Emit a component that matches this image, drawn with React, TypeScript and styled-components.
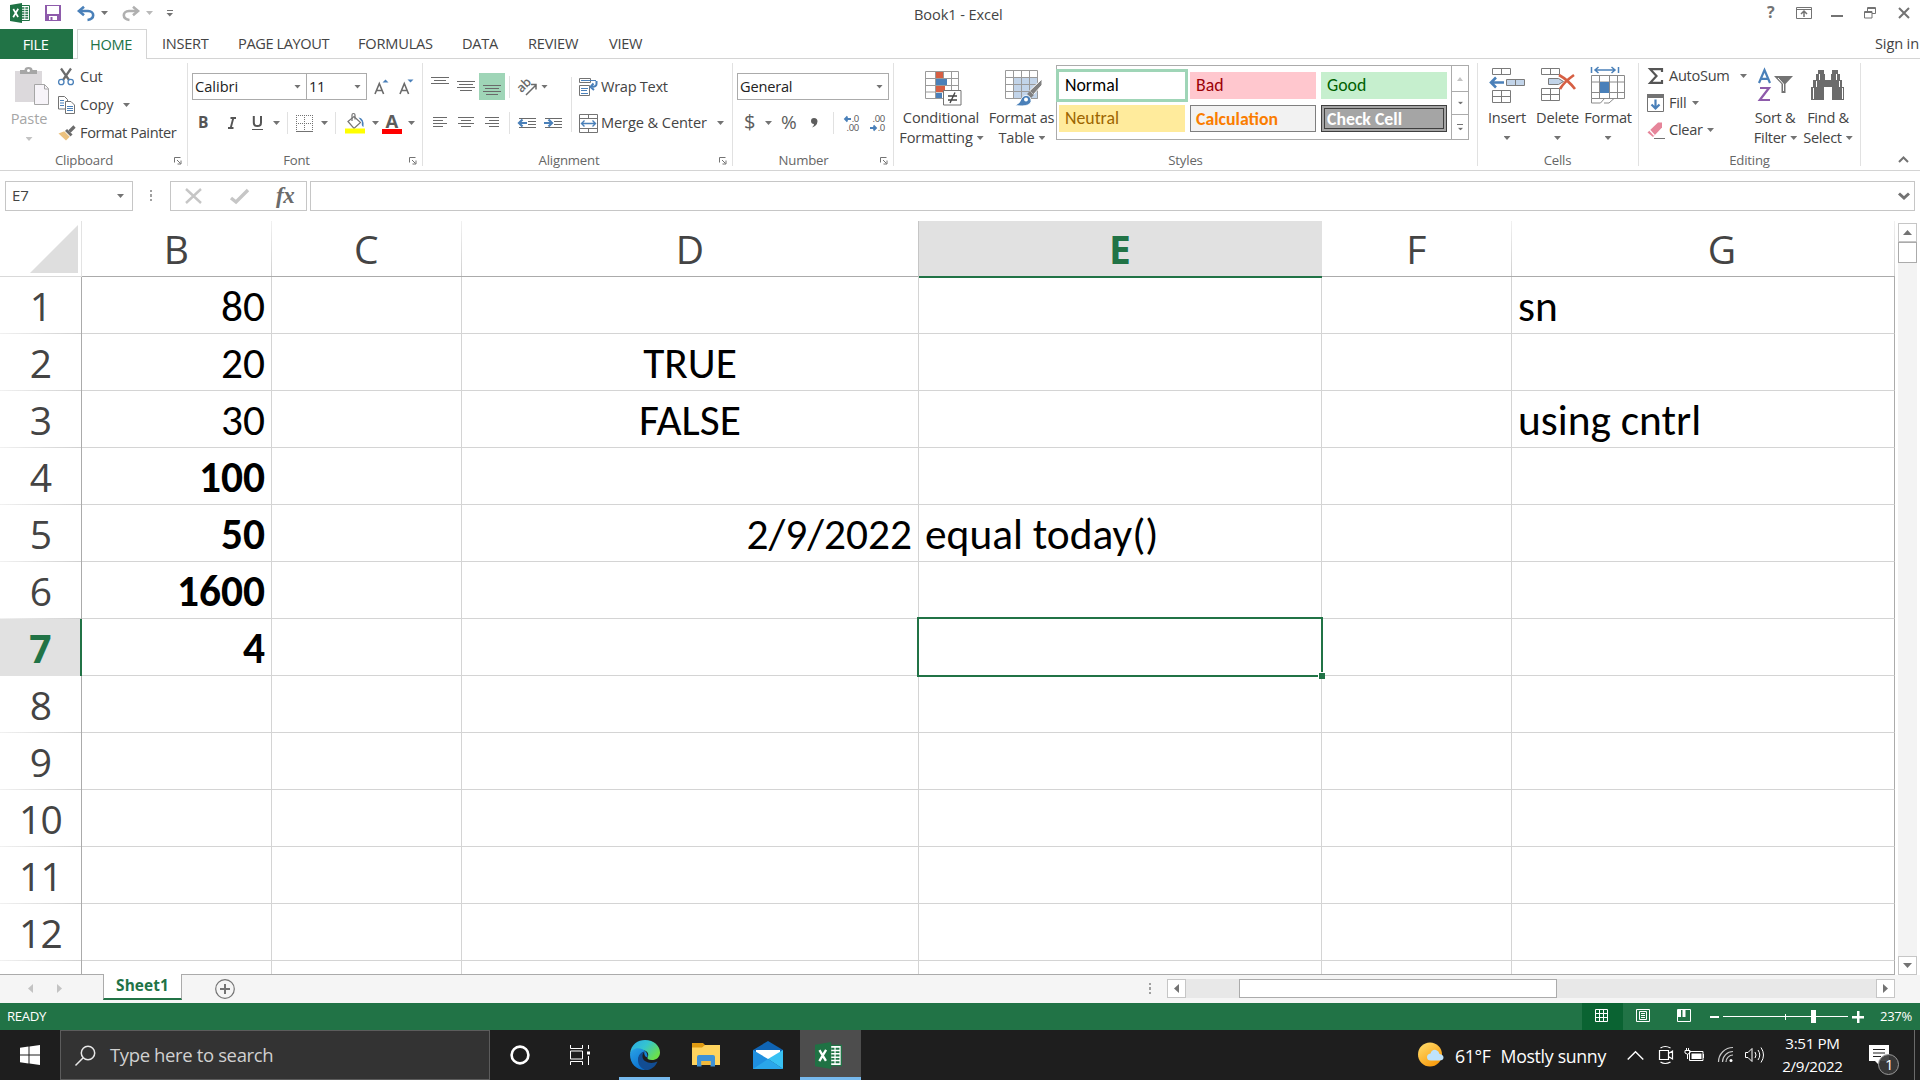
import React from 'react';
import styled, { createGlobalStyle, css } from 'styled-components';

const GREEN = '#217346';
const INK = '#444444';
const ICON = '#737373';
const BLUE = '#4a80b9';
const LINE = '#d4d4d4';

const Global = createGlobalStyle`
  * { box-sizing: border-box; }
  html, body { margin: 0; padding: 0; overflow: hidden; background: #fff; }
  body { font-family: "Open Sans", "Noto Sans", sans-serif; color: ${INK}; }
  svg { display: block; flex: none; overflow: visible; }
`;

const Window = styled.div`
  width: 1920px;
  height: 1080px;
  display: flex;
  flex-direction: column;
  background: #fff;
  overflow: hidden;
`;

/* Text label used all over the chrome */
const Label = styled.span<{ $size?: number; $ls?: number; $color?: string; $bold?: boolean }>`
  font-size: ${p => p.$size ?? 14.6}px;
  letter-spacing: ${p => p.$ls ?? -0.3}px;
  color: ${p => p.$color ?? INK};
  font-weight: ${p => (p.$bold ? 700 : 400)};
  line-height: 20px;
  padding-bottom: 2px;
  white-space: pre;
`;

/* Row of controls with explicit column tracks */
const Strip = styled.div<{ $cols: string; $h: number; $pl?: number }>`
  display: grid;
  grid-template-columns: ${p => p.$cols};
  height: ${p => p.$h}px;
  padding-left: ${p => p.$pl ?? 0}px;
  align-items: center;
  flex: none;
`;

const Caret = styled.i<{ $color?: string }>`
  display: block;
  width: 7px;
  height: 4px;
  flex: none;
  background: ${p => p.$color ?? ICON};
  clip-path: polygon(0 0, 100% 0, 50% 100%);
`;

/* ---------- title bar ---------- */
const TitleBar = styled.header`
  height: 29px;
  flex: none;
  display: grid;
  grid-template-columns: 914px 846px 160px;
`;
const TitleText = styled(Label)`
  padding-top: 4px;
`;

/* ---------- tabs ---------- */
const TabRow = styled.nav`
  height: 30px;
  flex: none;
  display: grid;
  grid-template-columns: 73px 4px 70px 15px 76px 120px 104px 66px 81px 1fr 45px;
  border-bottom: 1px solid ${LINE};
  > span { padding-top: 4px; }
`;
const FileTab = styled.div`
  background: ${GREEN};
  text-align: center;
  padding: 4px 2px 0 0;
  height: 30px;
`;
const ActiveTab = styled.div`
  border: 1px solid ${LINE};
  border-bottom: none;
  background: #fff;
  height: 30px;
  text-align: center;
  padding: 3px 2px 0 0;
`;

/* ---------- ribbon ---------- */
const Ribbon = styled.section`
  height: 112px;
  flex: none;
  display: flex;
  border-bottom: 1px solid ${LINE};
`;
const Group = styled.div<{ $w: number }>`
  width: ${p => p.$w}px;
  flex: none;
  height: 103px;
  margin-top: 4px;
  border-right: 1px solid #e1e1e1;
  display: flex;
  flex-direction: column;
`;
const GroupBody = styled.div`
  height: 87px;
  flex: none;
  display: flex;
`;
const Rows = styled.div<{ $pt?: number; $w?: number }>`
  display: flex;
  flex-direction: column;
  padding-top: ${p => p.$pt ?? 0}px;
  width: ${p => (p.$w ? p.$w + 'px' : 'auto')};
  flex: none;
`;
const GroupFooter = styled.div<{ $shift?: number }>`
  height: 20px;
  flex: none;
  display: flex;
  justify-content: center;
  padding-right: ${p => p.$shift ?? 0}px;
`;
const FooterRow = styled.div`
  display: grid;
  grid-template-columns: 1fr 13px;
`;
const LauncherSlot = styled.div`
  padding-top: 7px;
`;
const BigButton = styled.div<{ $w: number }>`
  width: ${p => p.$w}px;
  flex: none;
  display: flex;
  flex-direction: column;
  align-items: center;
`;
const IconArea = styled.div<{ $pt?: number; $pl?: number }>`
  height: 45px;
  padding: ${p => p.$pt ?? 4}px 0 0 ${p => p.$pl ?? 0}px;
`;
const PasteArea = styled(IconArea)`
  height: 46px;
`;
const TextLine = styled.div<{ $pl?: number }>`
  height: 20px;
  display: flex;
  align-items: center;
  gap: 4px;
  padding-left: ${p => p.$pl ?? 0}px;
`;
const ComboBox = styled.div<{ $overlap?: boolean }>`
  height: 27px;
  border: 1px solid #ababab;
  display: flex;
  align-items: center;
  justify-content: space-between;
  padding: 0 5px 0 2px;
  margin-left: ${p => (p.$overlap ? -1 : 0)}px;
`;
const VLine = styled.i<{ $h: number }>`
  display: block;
  width: 1px;
  height: ${p => p.$h}px;
  background: #e1e1e1;
`;
const TopAligned = styled.div`
  padding-bottom: 10px;
`;
const Pressed = styled.div`
  width: 26px;
  height: 27px;
  background: #9fd5b7;
  padding: 12px 0 0 4px;
`;
const GalleryBox = styled.div`
  display: grid;
  grid-template-columns: 394px 17px;
  width: 413px;
  height: 75px;
  margin: 2px 0 0 1px;
  border: 1px solid #ababab;
`;
const GalleryGrid = styled.div`
  display: grid;
  grid-template-columns: 126px 126px 126px;
  grid-template-rows: 27px 27px;
  gap: 6px 5px;
  padding: 6px 0 0 2px;
`;
const Swatch = styled.div<{ $bg: string; $fg: string; $kind?: 'active' | 'calc' | 'check' }>`
  background: ${p => p.$bg};
  color: ${p => p.$fg};
  font-family: Carlito, Calibri, "Open Sans", sans-serif;
  font-size: 17.8px;
  line-height: 27px;
  padding-left: 6px;
  white-space: pre;
  ${p => p.$kind === 'active' && css`box-shadow: 0 0 0 3px #9fd5b7;`}
  ${p => p.$kind === 'calc' && css`border: 1px solid #7f7f7f; font-weight: 700; line-height: 26px; padding-left: 5px;`}
  ${p => p.$kind === 'check' && css`border: 4px double #3f3f3f; font-weight: 700; line-height: 20px; padding-left: 2px;`}
`;
const GalleryScroll = styled.div`
  border-left: 1px solid #ababab;
  display: grid;
  grid-template-rows: 26px 23px 24px;
`;
const ScrollStep = styled.div`
  display: flex;
  flex-direction: column;
  gap: 2px;
  align-items: center;
  justify-content: center;
  border-bottom: 1px solid #ababab;
  &:last-child { border-bottom: none; }
  i { transform: scale(0.8); }
`;
const RibbonEnd = styled.div`
  flex: 1;
  padding: 97px 0 0 37px;
`;

/* ---------- formula bar ---------- */
const FormulaRow = styled.section`
  height: 50px;
  flex: none;
  padding: 10px 5px 0 5px;
  display: grid;
  grid-template-columns: 128px 37px 137px 3px 1605px;
`;
const Box = styled.div`
  height: 30px;
  border: 1px solid #c6c6c6;
  display: flex;
  align-items: center;
`;
const NameBox = styled(Box)`
  justify-content: space-between;
  padding: 0 8px 0 6px;
`;
const FxBox = styled(Box)`
  padding-left: 14px;
  gap: 27px;
`;
const InputBox = styled(Box)`
  justify-content: flex-end;
  padding-right: 4px;
`;
const FxGlyph = styled.span`
  font-family: "Liberation Serif", serif;
  font-style: italic;
  font-weight: 700;
  font-size: 23px;
  line-height: 24px;
  letter-spacing: -0.5px;
  color: #6b6b6b;
`;
const Dots = styled.div`
  display: flex;
  flex-direction: column;
  justify-content: center;
  gap: 2px;
  height: 29px;
  padding-left: 17px;
`;
const Dot = styled.i`
  width: 2px;
  height: 2.6px;
  background: #a0a0a0;
`;

/* ---------- sheet ---------- */
const SheetArea = styled.main`
  height: 754px;
  flex: none;
  display: grid;
  grid-template-columns: 1895px 25px;
  background: #fff;
`;
const Sheet = styled.div`
  display: grid;
  grid-template-columns: 82px 190px 190px 457px 403px 190px 383px;
  grid-template-rows: 56px repeat(12, 57px) 14px;
  overflow: hidden;
  border-bottom: 1px solid #ababab;
`;
const Corner = styled.div`
  border-bottom: 1px solid #d9d9d9;
  border-right: 1px solid #e3e3e3;
  padding: 4px 0 0 30px;
`;
const CornerMark = styled.i`
  display: block;
  width: 48px;
  height: 48px;
  background: #dedede;
  clip-path: polygon(100% 0, 100% 100%, 0 100%);
`;
const headFont = css`
  font-size: 39px;
  letter-spacing: -0.8px;
  white-space: pre;
  text-align: center;
`;
const ColHead = styled.div<{ $on?: boolean; $cut?: boolean }>`
  ${headFont}
  line-height: 56px;
  padding: 0 2px 0 ${p => (p.$cut ? 38 : 0)}px;
  color: ${p => (p.$on ? GREEN : INK)};
  font-weight: ${p => (p.$on ? 700 : 400)};
  background: ${p => (p.$on ? '#e1e1e1' : 'linear-gradient(#f1f1f1, #d0d0d0) right / 1px 100% no-repeat')};
  box-shadow: ${p => (p.$on ? `0 1px 0 ${GREEN}, -1px 0 0 #c6c6c6` : 'none')};
  border-bottom: 1px solid ${p => (p.$on ? GREEN : '#ababab')};
  ${p => p.$on && css`z-index: 1;`}
`;
const RowHead = styled.div<{ $on?: boolean }>`
  ${headFont}
  line-height: 57px;
  color: ${p => (p.$on ? GREEN : INK)};
  font-weight: ${p => (p.$on ? 700 : 400)};
  background: ${p => (p.$on ? '#e1e1e1' : 'linear-gradient(90deg, #f1f1f1, #d0d0d0) bottom / 100% 1px no-repeat')};
  border-right: ${p => (p.$on ? `2px solid ${GREEN}` : '1px solid #ababab')};
`;
const Cell = styled.div<{ $align?: string; $bold?: boolean; $last?: boolean }>`
  border-right: 1px solid ${p => (p.$last ? '#ababab' : LINE)};
  border-bottom: 1px solid ${LINE};
  font-family: Carlito, Calibri, "Open Sans", sans-serif;
  font-size: 43.4px;
  line-height: 59px;
  color: #000;
  text-align: ${p => p.$align ?? 'left'};
  font-weight: ${p => (p.$bold ? 700 : 400)};
  padding: 0 6px;
  white-space: pre;
  position: relative;
  min-width: 0;
`;
const Selection = styled.div`
  position: absolute;
  inset: -2px;
  border: 2px solid ${GREEN};
  z-index: 2;
`;
const FillHandle = styled.i`
  position: absolute;
  right: -4px;
  bottom: -4px;
  width: 7px;
  height: 7px;
  background: ${GREEN};
  border: 1px solid #fff;
  border-width: 1px 0 0 1px;
`;
const VScroll = styled.div`
  width: 19px;
  margin: 2px 0 0 3px;
  display: flex;
  flex-direction: column;
  background: #f3f3f3;
`;
const ScrollButton = styled.div`
  width: 19px;
  height: 19px;
  flex: none;
  border: 1px solid #c6c6c6;
  background: #fff;
  display: flex;
  align-items: center;
  justify-content: center;
`;
const VThumb = styled.div`
  height: 21px;
  border: 1px solid #ababab;
  background: #fff;
`;
const Spacer = styled.div`
  flex: 1;
`;

/* ---------- sheet tabs ---------- */
const SheetTabs = styled.section`
  height: 28px;
  flex: none;
  background: #f5f5f5;
  display: grid;
  grid-template-columns: 103px 79px 33px 934px 18px 728px 1fr;
`;
const NavArrows = styled.div`
  display: flex;
  gap: 24px;
  padding: 9px 0 0 28px;
`;
const SheetTab = styled.div`
  height: 26px;
  margin-top: -1px;
  background: #fff;
  border: 1px solid #ababab;
  border-top: none;
  border-bottom: 2px solid ${GREEN};
  text-align: center;
  line-height: 22px;
  z-index: 1;
`;
const AddSheet = styled.div`
  padding-top: 4px;
`;
const HScroll = styled.div`
  height: 19px;
  margin-top: 4px;
  display: flex;
  background: #e8e8e8;
`;
const HThumb = styled.div`
  width: 318px;
  height: 19px;
  margin-left: 53px;
  background: #fff;
  border: 1px solid #ababab;
`;
const TabDots = styled(Dots)`
  height: 27px;
  padding-left: 0;
`;

/* ---------- status bar ---------- */
const StatusBar = styled.section`
  height: 27px;
  flex: none;
  background: ${GREEN};
  display: grid;
  grid-template-columns: 1582px 41px 40px 47px 170px 40px;
  align-items: center;
`;
const ViewButton = styled.div<{ $on?: boolean; $pr?: number }>`
  height: 27px;
  display: flex;
  align-items: center;
  justify-content: center;
  padding: 0 ${p => p.$pr ?? 2}px 2px 0;
  background: ${p => (p.$on ? '#0a6332' : 'transparent')};
`;
const Status = styled(Label)`
  padding-left: 7px;
`;

/* ---------- task bar ---------- */
const Taskbar = styled.footer`
  height: 50px;
  flex: none;
  background: #1e1e1e;
  display: grid;
  grid-template-columns: 60px 430px 60px 60px 60px 72px 58px 61px 557px 209px 149px 73px 65px 1fr;
`;
const TaskItem = styled.div<{ $on?: boolean; $pr?: number }>`
  display: flex;
  align-items: center;
  justify-content: center;
  padding-right: ${p => p.$pr ?? 0}px;
  background: ${p => (p.$on ? '#4d4d4d' : 'transparent')};
`;
const RunningItem = styled(TaskItem)<{ $inset: number }>`
  border-bottom: 3px solid #76b9ed;
  margin-left: ${p => p.$inset}px;
  padding-top: 3px;
`;
const SearchBox = styled.div`
  background: #333;
  border: 1px solid #5c5c5c;
  display: flex;
  align-items: center;
  padding: 2px 0 0 14px;
  gap: 14px;
`;
const Weather = styled.div`
  display: flex;
  align-items: center;
  gap: 11px;
`;
const WeatherText = styled.div`
  display: flex;
  gap: 10px;
  padding-top: 4px;
`;
const Tray = styled.div`
  display: grid;
  grid-template-columns: 32px 26px 33px 27px 30px;
  align-items: center;
`;
const Clock = styled.div`
  display: flex;
  flex-direction: column;
  align-items: center;
  gap: 1px;
  padding-top: 3px;
`;
const Notifications = styled.div`
  padding: 14px 0 0 19px;
`;
const ShowDesktop = styled.div`
  border-left: 1px solid #6a6a6a;
`;

/* ---------- icons ---------- */
const ExcelIcon = ({ w }: { w: number }) => (
  <svg width={w} height={w} viewBox="0 0 20 20">
    <path d="M11 2.500h8.500v15H11z" fill="#fff" stroke={GREEN} />
    <path d="M12 5h2.400M12 7.500h2.400M12 10h2.400M12 12.500h2.400M12 15h2.400M15.300 5h2.800M15.300 7.500h2.800M15.300 10h2.800M15.300 12.500h2.800M15.300 15h2.800" stroke={GREEN} strokeWidth="1.300" />
    <path d="M0 2 12 0v20L0 18z" fill="#1f7244" />
    <path d="m3.300 6 4.800 8M8.200 5.800 3.200 14.200" stroke="#fff" strokeWidth="1.700" />
  </svg>
);
const SaveIcon = () => (
  <svg width="16" height="16" viewBox="0 0 16 16">
    <path d="M0 0h16v16H0z" fill="#8e5bab" />
    <path d="M2 1h12v8H2z" fill="#fff" />
    <path d="M4 11h8v4H4z" fill="#fff" />
    <path d="M5.500 12h2v3h-2z" fill="#8e5bab" />
  </svg>
);
const UndoIcon = ({ color, flip }: { color: string; flip?: boolean }) => (
  <svg width="18" height="15" viewBox="0 0 18 15">
    <g transform={flip ? 'translate(18 0) scale(-1 1)' : undefined} fill="none" stroke={color} strokeWidth="2.600">
      <path d="M7 0.800 2 5l5 4.200" />
      <path d="M2.500 5h8.500c7 0.300 7 8.200-0.500 9" />
    </g>
  </svg>
);
const PasteIcon = () => (
  <svg width="34" height="38" viewBox="0 0 34 38">
    <path d="M0 4h27v31H0z" fill="#dcd9dc" />
    <path d="M5 7V3h4.500q0-3 4-3t4 3H22v4z" fill="#a6a6a6" />
    <circle cx="13.500" cy="3.500" r="1.500" fill="#fff" />
    <path d="M19.500 17.500h10l4 4v16h-14z" fill="#f7f4f9" stroke="#a6a6a6" />
    <path d="M29.500 17.500v4.500h4" fill="none" stroke="#a6a6a6" />
  </svg>
);
const CutIcon = () => (
  <svg width="16" height="18" viewBox="0 0 16 18">
    <path d="M3 0.500 11 12M13 0.500 5 12" stroke="#6b6b6b" strokeWidth="2.200" />
    <circle cx="3.300" cy="14" r="2.700" fill="none" stroke={BLUE} strokeWidth="1.300" />
    <circle cx="12.700" cy="14" r="2.700" fill="none" stroke={BLUE} strokeWidth="1.300" />
  </svg>
);
const CopyIcon = () => (
  <svg width="17" height="18" viewBox="0 0 17 18">
    <path d="M.5.500h6l3 3v9.500h-9z" fill="#fff" stroke={ICON} />
    <path d="M2 4.500h4M2 7h4M2 9.500h4" stroke={BLUE} />
    <path d="M7.500 5.500h5.500l3.500 3.500v8.500h-9z" fill="#fff" stroke={ICON} />
    <path d="M9 10.500h6M9 12.500h6M9 14.500h6" stroke={BLUE} />
  </svg>
);
const BrushIcon = () => (
  <svg width="18" height="16" viewBox="0 0 18 16">
    <path d="M0.500 8.500 7 6l5 5.500-4 4z" fill="#ecc27f" />
    <path d="m8 5 5.500 5.500" stroke="#6b6b6b" strokeWidth="3" />
    <path d="m11.500 6.500 5-5" stroke="#6b6b6b" strokeWidth="3.200" />
    <path d="m6.200 5.800 6 6" stroke="#fff" strokeWidth="0.900" />
  </svg>
);
const Launcher = () => (
  <svg width="8" height="8" viewBox="0 0 8 8" fill="none" stroke={ICON}>
    <path d="M.5 5.500V.500h6M3 3l3.500 3.500M7 3.500V7H3.500" />
  </svg>
);
const GrowIcon = ({ down }: { down?: boolean }) => (
  <svg width="16" height="16" viewBox="0 0 16 16">
    <path d="M1 15 5.300 4.500 9.600 15M2.600 11.500h5.400" fill="none" stroke="#6b6b6b" strokeWidth="1.600" />
    <path d={down ? 'M8.500 0.500h6l-3 3z' : 'M8.500 3.500h6l-3-3z'} fill={BLUE} />
  </svg>
);
const BordersIcon = () => (
  <svg width="17" height="17" viewBox="0 0 17 17" stroke={ICON} fill="none">
    <path d="M0 .5h17M.5 0v16M8.500 0v16M16.500 0v16M0 8.500h17" strokeDasharray="1 1" />
    <path d="M0 16.500h17" />
  </svg>
);
const BucketIcon = () => (
  <svg width="20" height="21" viewBox="0 0 20 21">
    <path d="M3 8.500 9 3.500l6.500 6-6.500 6z" fill="#fff" stroke={ICON} strokeWidth="1.200" />
    <path d="M7 8V2q0-1.500 1.500-1.500T10 2v4.500" fill="none" stroke={ICON} strokeWidth="1.200" />
    <path d="M13.500 4.500q6 0.500 5 9.500-2.500-1-1.500-5z" fill={BLUE} />
    <path d="M0 15.500h20v5H0z" fill="#ffff00" />
  </svg>
);
const FontColor = styled.div`
  width: 20px;
  height: 21px;
  border-bottom: 5px solid #ff0000;
  font-weight: 700;
  font-size: 18.5px;
  line-height: 15px;
  text-align: center;
  color: #5d5d5d;
`;
const Lines = ({ rows, w = 18, align = 'mid' }: { rows: number[]; w?: number; align?: string }) => (
  <svg width={w} height={rows.length * 3} viewBox={`0 0 ${w} ${rows.length * 3}`} shapeRendering="crispEdges">
    {rows.map((r, i) => (
      <rect key={i} y={i * 3} x={align === 'left' ? 0 : align === 'right' ? w - r : (w - r) / 2} width={r} height="1" fill="#6a6a6a" />
    ))}
  </svg>
);
const OrientIcon = () => (
  <svg width="20" height="18" viewBox="0 0 20 18">
    <text x="0" y="11" transform="rotate(-45 7 9)" fontSize="12.500" fontWeight="600" fill="#6a6a6a">ab</text>
    <path d="M8 17 17.500 7.500M13 6.500h5v5" fill="none" stroke="#6a6a6a" strokeWidth="1.500" />
  </svg>
);
const IndentIcon = ({ right }: { right?: boolean }) => (
  <svg width="18" height="11" viewBox="0 0 18 11">
    <path d="M1 .5h17M10 3.500h8M10 6.500h8M1 9.500h17" stroke="#6a6a6a" />
    <path d="M0 3h10v4H0z" fill="#fff" />
    <path d={right ? 'M0 5h8M4.500 1.500 8 5 4.500 8.500' : 'M9 5H1M4.500 1.500 1 5l3.500 3.500'} fill="none" stroke={BLUE} strokeWidth="2.200" />
  </svg>
);
const WrapIcon = () => (
  <svg width="19" height="18" viewBox="0 0 19 18" fill="none">
    <path d="M.5.500h11v4H.500zM.5 7.500h10v10H.500z" stroke={ICON} />
    <path d="M2 2.500h15M2 10.500h7M2 12.500h6M2 15.500h7" stroke={BLUE} />
    <path d="M17.500 3v3q0 3-6 3M14.500 5.500 11.500 9l3.500 3" stroke={BLUE} strokeWidth="2" />
  </svg>
);
const MergeIcon = () => (
  <svg width="19" height="19" viewBox="0 0 19 19" fill="none" stroke={ICON}>
    <path d="M.5.500h18v18H.500zM.5 4.500h18M.5 14.500h18M9.500.500v4M9.500 14.500v4" />
    <path d="M2.500 9.500h14M5.500 6.500l-3 3 3 3M13.500 6.500l3 3-3 3" stroke={BLUE} strokeWidth="1.400" />
  </svg>
);

/* Two stacked digits with a blue arrow beside one of them */
const DecimalBox = styled.div`
  width: 16px;
  height: 18px;
  display: flex;
  flex-direction: column;
  font-size: 9.5px;
  line-height: 9px;
  letter-spacing: -0.3px;
  color: #555;
`;
const DecimalLine = styled.div`
  display: flex;
  height: 9px;
  justify-content: flex-end;
  align-items: center;
  gap: 1px;
`;
const DecimalArrow = ({ right }: { right?: boolean }) => (
  <svg width="7" height="6" viewBox="0 0 7 6">
    <path d={right ? 'M0 3h6M3.500.5 6 3 3.500 5.500' : 'M7 3H1M3.500.5 1 3l2.500 2.500'} fill="none" stroke={BLUE} strokeWidth="1.800" />
  </svg>
);
const DecimalIcon = ({ dec }: { dec?: boolean }) => (
  <DecimalBox>
    <DecimalLine>{!dec && <DecimalArrow />}{dec ? '.00' : '.0'}</DecimalLine>
    <DecimalLine>{dec && <DecimalArrow right />}{dec ? '.0' : '.00'}</DecimalLine>
  </DecimalBox>
);
const CondIcon = () => (
  <svg width="37" height="35" viewBox="0 0 37 35">
    <path d="M.5.500h33v27H.500zM.5 7.500h33M.5 14.500h33M.5 21h33M10.500.500v27M18.500.500v27M26.500.500v27" fill="#fff" stroke="#9a9a9a" />
    <path d="M11 1h7v6h-7zM11 15h9v6h-9z" fill="#d65f43" />
    <path d="M11 8h11v6H11zM11 22h6v5h-6z" fill={BLUE} />
    <path d="M18.500 19.500h17.500v14.500H18.500z" fill="#fff" stroke={ICON} />
    <path d="M23 25h9M23 29h9M30 21.500 25 32" stroke={INK} strokeWidth="1.400" />
  </svg>
);
const TableIcon = () => (
  <svg width="38" height="36" viewBox="0 0 38 36">
    <path d="M.5.500h32v28H.500z" fill="#fff" />
    <path d="M9 8h24v21H9z" fill="#c2d4e9" />
    <path d="M.5.500h32v28H.500zM.5 7.500h32M.5 14.500h32M.5 21.500h32M8.500.500v28M16.500.500v28M24.500.500v28" fill="none" stroke="#9a9a9a" />
    <path d="M37 9v6l-8.500 9.500-4-3.500z" fill="#808080" stroke="#fff" />
    <path d="m23.500 22.500 4 4" stroke="#808080" strokeWidth="4" />
    <path d="M10 35.500q5-2 6.500-7 3-5 8-2 4 6-2 8.500-4 1.500-12.500.500z" fill={BLUE} stroke="#fff" strokeWidth=".8" />
    <circle cx="21" cy="29.500" r="2" fill="#fff" />
  </svg>
);
const InsertIcon = () => (
  <svg width="36" height="36" viewBox="0 0 36 36" fill="none" stroke="#7a7a7a">
    <path d="M3.500.500h18v6h-18zM12.500.500v6M3.500 22.500h18v12h-18zM12.500 22.500v12M3.500 28.500h18" />
    <path d="M17.500 11.500h18v6h-18z" fill="#c2d4e9" /><path d="M26.500 11.500v6" />
    <path d="M15 14.500H2M7 9.500l-5 5 5 5" stroke={BLUE} strokeWidth="2.600" />
  </svg>
);
const DeleteIcon = () => (
  <svg width="36" height="36" viewBox="0 0 36 36" fill="none" stroke="#7a7a7a">
    <path d="M1.500.500h18v6h-18zM10.500.500v6M1.500 20.500h18v12h-18zM10.500 20.500v12M1.500 26.500h18" />
    <path d="M8.500 10.500h10l5 3-5 3h-10z" fill="#c2d4e9" />
    <path d="M19 7q9 5 16 14M34 7Q24 14 20 21" stroke="#d65f43" strokeWidth="2.600" />
  </svg>
);
const FormatIcon = () => (
  <svg width="34" height="37" viewBox="0 0 34 37" fill="none" stroke="#8a8a8a">
    <path d="M.5 8.500h33v23H.500zM.5 15h33M.5 25.500h33M8.500 8.500v23M18.500 8.500v23M26.500 8.500v23" />
    <path d="M9 15h9v11H9z" fill={BLUE} stroke="none" />
    <path d="M.5 31.500v4.500h9l4-4.500M13 36h5l5-4.500" />
    <path d="M.5 0v6M27.500 0v6M4 3h20M7.500 0l-3.500 3 3.500 3M20.500 0l3.500 3-3.500 3" stroke={BLUE} strokeWidth="1.500" />
  </svg>
);
const SigmaIcon = () => (
  <svg width="16" height="16" viewBox="0 0 16 16">
    <path d="M14 4V1.200H2.200L8.500 8 2.200 14.800H14V12" fill="none" stroke="#555" strokeWidth="2.200" />
  </svg>
);
const FillIcon = () => (
  <svg width="17" height="18" viewBox="0 0 17 18" fill="none">
    <path d="M.5 1h16v16.500H.500z" stroke={ICON} /><path d="M0 0h17v4H0z" fill={ICON} />
    <path d="M8.500 5.500v9M4.500 10.500l4 4 4-4" stroke={BLUE} strokeWidth="2.200" />
  </svg>
);
const EraserIcon = () => (
  <svg width="18" height="17" viewBox="0 0 18 17">
    <path d="M0.500 10.500 11 0.500h4v5L6 15z" fill="#e6859a" />
    <path d="m2.500 8 5 5.500" stroke="#fff" strokeWidth="1.300" />
    <path d="M7 16.500h11" stroke={ICON} />
  </svg>
);
const SortIcon = () => (
  <svg width="35" height="33" viewBox="0 0 35 33" fill="none">
    <path d="M1 14 6.500 1 12 14M3 9.800h7" stroke={BLUE} strokeWidth="2.200" />
    <path d="M2 19h9L1.800 31H12" stroke="#8e5bab" strokeWidth="2.200" />
    <path d="M16 7h19l-7.500 8v9h-4v-9z" fill={ICON} /><path d="m20 9 5.500 6v7" stroke="#fff" />
  </svg>
);
const FindIcon = () => (
  <svg width="34" height="31" viewBox="0 0 34 31" fill="#6b6b6b">
    <path d="M7 0h6v4h1v6h6V4h1V0h6v4h2v6h2v7h2v13H21V17h-8v13H0V17h2v-7h3V4h2z" />
    <path d="M2.500 18v11M5.500 11v6M8.500 4v6M31.500 18v11M28.500 11v6M25.500 4v6" stroke="#fff" fill="none" />
  </svg>
);
const EdgeIcon = () => (
  <svg width="30" height="30" viewBox="0 0 30 30">
    <defs>
      <linearGradient id="edgeTop" x1="0" y1="0" x2="1" y2=".6"><stop offset="0" stopColor="#2aa7e8" /><stop offset=".5" stopColor="#34c4d0" /><stop offset="1" stopColor="#6be04b" /></linearGradient>
      <linearGradient id="edgeLow" x1="0" y1="0" x2=".6" y2="1"><stop offset="0" stopColor="#2aa3e6" /><stop offset="1" stopColor="#0a6fce" /></linearGradient>
    </defs>
    <path d="M0 14C1 4 8 0 15 0c9 0 15 6 15 12.500 0 5-4 7.500-8 7.500-3.500 0-5-1-4.500-2.500C20 13 16 10 12 10 6 10 1 13 0 14z" fill="url(#edgeTop)" />
    <path d="M0 14.500C1 9 7 7 12 9c4 1.500 6 5 5.500 8.500C14 17 14 12 14.500 11.500 9 13 7 19 10 24c1.500 3 4 5.500 6 6C7 30.500 0 24 0 14.500z" fill="url(#edgeLow)" />
    <path d="M8 20c0-4.500 2.500-7.500 6.500-8.500-3 3-2.500 7.500.5 9.500 3.500 2.500 8.500 2.500 12.500.5C25 27.500 20 30.500 15.500 30 11 28.500 8 25 8 20z" fill="#124d93" />
  </svg>
);
const FolderIcon = () => (
  <svg width="28" height="24" viewBox="0 0 28 24">
    <path d="M0 0h11l3 3v3H0z" fill="#e09b12" />
    <path d="M0 4.500h10L13 2h15v20H0z" fill="#ffd45e" />
    <path d="M5 23.500V14q0-2 2-2h14q2 0 2 2v9.500h-4.500V18h-9v5.500z" fill="#3f92d6" />
    <path d="M9.500 18h9v4h-9z" fill="#f2b93b" />
  </svg>
);
const MailIcon = () => (
  <svg width="30" height="28" viewBox="0 0 30 28">
    <path d="M0 9 15 0l15 9v5H0z" fill="#0f64b4" />
    <path d="M3 9h24v9H3z" fill="#fff" />
    <path d="M0 9v19h30L15 18z" fill="#1f8fdf" />
    <path d="M30 9v19L15 18z" fill="#38c1f3" />
    <path d="M0 28 15 18l15 10z" fill="#2aa6ea" />
  </svg>
);
const WeatherIcon = () => (
  <svg width="26" height="26" viewBox="0 0 26 26">
    <defs><linearGradient id="sun" x1="0" y1="0" x2=".7" y2="1"><stop offset="0" stopColor="#ffe071" /><stop offset="1" stopColor="#f99a0b" /></linearGradient></defs>
    <circle cx="12" cy="12.500" r="12" fill="url(#sun)" />
    <path d="M13 18.500q-4 0-4-3.500 0-3 3.500-3.500Q14 7 18 8q3 1 3.500 4 4 .5 4 3.500 0 3-4 3z" fill="#bfe3fb" />
  </svg>
);

/* ---------- data ---------- */
const columns = ['B', 'C', 'D', 'E', 'F', 'G'];
type CellData = { text: string; align?: string; bold?: boolean };
const cells: Record<string, CellData> = {
  B1: { text: '80', align: 'right' },
  B2: { text: '20', align: 'right' },
  B3: { text: '30', align: 'right' },
  B4: { text: '100', align: 'right', bold: true },
  B5: { text: '50', align: 'right', bold: true },
  B6: { text: '1600', align: 'right', bold: true },
  B7: { text: '4', align: 'right', bold: true },
  D2: { text: 'TRUE', align: 'center' },
  D3: { text: 'FALSE', align: 'center' },
  D5: { text: '2/9/2022', align: 'right' },
  E5: { text: 'equal today()' },
  G1: { text: 'sn' },
  G3: { text: 'using cntrl' },
};

const Footer = ({ name, shift, launcher }: { name: string; shift?: number; launcher?: boolean }) => {
  const label = <GroupFooter $shift={shift}><Label $size={13.2} $ls={-0.2} $color="#666">{name}</Label></GroupFooter>;
  return launcher ? <FooterRow>{label}<LauncherSlot><Launcher /></LauncherSlot></FooterRow> : label;
};

export default function App() {
  return (
    <Window>
      <Global />
      <TitleBar>
        <Strip $h={26} $pl={10} $cols="35px 32px 24px 21px 24px 20px 20px">
          <ExcelIcon w={20} />
          <SaveIcon />
          <UndoIcon color={BLUE} />
          <Caret />
          <UndoIcon color="#b0b0b0" flip />
          <Caret $color="#b9b9b9" />
          <svg width="8" height="8" viewBox="0 0 8 8"><path d="M1 1.500h6" stroke={ICON} /><path d="M.5 4h6.500L3.800 7.500z" fill={ICON} /></svg>
        </Strip>
        <TitleText $ls={-0.1}>Book1 - Excel</TitleText>
        <Strip $h={26} $cols="29px 35px 33px 34px 20px" $pl={7}>
          <Label $size={16} $bold $color={ICON}>?</Label>
          <svg width="16" height="12" viewBox="0 0 16 12" fill="none" stroke={ICON}><path d="M.5.500h15v11H.500zM.5 2.500h15" /><path d="M8 10V4.500M5 7l3-3 3 3" strokeWidth="1.500" /></svg>
          <svg width="12" height="12" viewBox="0 0 12 12"><path d="M0 9h12" stroke={ICON} strokeWidth="2" /></svg>
          <svg width="12" height="12" viewBox="0 0 12 12" fill="none" stroke={ICON}><path d="M3.500 4V.500h8v6H8M3.500 1.500h8M.5 4.500h7.500v6.500H.500zM.5 5.500h7.500" /></svg>
          <svg width="12" height="12" viewBox="0 0 12 12"><path d="m1 1 10 10M11 1 1 11" stroke={ICON} strokeWidth="2" /></svg>
        </Strip>
      </TitleBar>

      <TabRow>
        <FileTab><Label $color="#fff" $ls={-0.4}>FILE</Label></FileTab>
        <div />
        <ActiveTab><Label $color={GREEN}>HOME</Label></ActiveTab>
        <div />
        <Label>INSERT</Label>
        <Label $ls={-0.4}>PAGE LAYOUT</Label>
        <Label $ls={-0.2}>FORMULAS</Label>
        <Label>DATA</Label>
        <Label $ls={-0.2}>REVIEW</Label>
        <Label>VIEW</Label>
        <Label $ls={-0.15}>Sign in</Label>
      </TabRow>

      <Ribbon>
        <Group $w={188}>
          <GroupBody>
            <BigButton $w={58}>
              <PasteArea $pl={5}><PasteIcon /></PasteArea>
              <TextLine><Label $color="#a6a6a6" $ls={-0.1}>Paste</Label></TextLine>
              <TextLine><Caret $color="#c3c3c3" /></TextLine>
            </BigButton>
            <Rows>
              <Strip $h={28} $cols="22px 60px"><CutIcon /><Label $ls={-0.3}>Cut</Label></Strip>
              <Strip $h={28} $cols="22px 43px 10px"><CopyIcon /><Label $ls={-0.2}>Copy</Label><Caret /></Strip>
              <Strip $h={28} $cols="22px 100px"><BrushIcon /><Label $ls={-0.38}>Format Painter</Label></Strip>
            </Rows>
          </GroupBody>
          <Footer name="Clipboard" shift={6} launcher />
        </Group>

        <Group $w={235}>
          <GroupBody>
            <Rows $pt={10}>
              <Strip $h={27} $pl={4} $cols="115px 60px 7px 25px 20px">
                <ComboBox><Label $color="#222" $ls={0}>Calibri</Label><Caret /></ComboBox>
                <ComboBox $overlap><Label $color="#222">11</Label><Caret /></ComboBox>
                <div />
                <GrowIcon />
                <GrowIcon down />
              </Strip>
              <Strip $h={46} $pl={10} $cols="29px 25px 21px 14px 9px 25px 14px 10px 27px 10px 26px 10px">
                <Label $bold $size={15.5} $color="#555">B</Label>
                <svg width="10" height="12" viewBox="0 0 10 12"><path d="M3.500 1H9M1 11h5.500M6.300 1 3.700 11" fill="none" stroke="#555" strokeWidth="1.900" /></svg>
                <svg width="11" height="16" viewBox="0 0 11 16"><path d="M1.800 1v6.500q0 3.600 3.600 3.600T9 7.500V1" fill="none" stroke="#555" strokeWidth="2" /><path d="M0 14.500h11" stroke="#555" /></svg>
                <Caret />
                <VLine $h={22} />
                <BordersIcon />
                <Caret />
                <VLine $h={22} />
                <BucketIcon />
                <Caret />
                <FontColor>A</FontColor>
                <Caret />
              </Strip>
            </Rows>
          </GroupBody>
          <Footer name="Font" shift={4} launcher />
        </Group>

        <Group $w={310}>
          <GroupBody>
            <Rows $pt={10} $w={148}>
              <Strip $h={27} $pl={8} $cols="26px 22px 30px 9px 23px 10px">
                <TopAligned><Lines rows={[18, 12, 18]} /></TopAligned>
                <Lines rows={[18, 14, 18, 12]} />
                <Pressed><Lines rows={[18, 14, 18, 12]} /></Pressed>
                <VLine $h={22} />
                <OrientIcon />
                <Caret />
              </Strip>
              <Strip $h={46} $pl={10} $cols="25px 27px 24px 9px 26px 18px">
                <Lines rows={[14, 10, 14, 10]} w={14} align="left" />
                <Lines rows={[16, 10, 16, 10]} w={16} />
                <Lines rows={[14, 10, 14, 10]} w={14} align="right" />
                <VLine $h={22} />
                <IndentIcon />
                <IndentIcon right />
              </Strip>
            </Rows>
            <Rows $pt={14} $w={8}><VLine $h={55} /></Rows>
            <Rows $pt={10}>
              <Strip $h={27} $cols="22px 100px"><WrapIcon /><Label $ls={-0.3}>Wrap Text</Label></Strip>
              <Strip $h={46} $cols="22px 116px 10px"><MergeIcon /><Label $ls={-0.1}>Merge &amp; Center</Label><Caret /></Strip>
            </Rows>
          </GroupBody>
          <Footer name="Alignment" shift={4} launcher />
        </Group>

        <Group $w={161}>
          <GroupBody>
            <Rows $pt={10}>
              <Strip $h={27} $pl={4} $cols="152px"><ComboBox><Label $color="#222" $ls={-0.2}>General</Label><Caret /></ComboBox></Strip>
              <Strip $h={46} $pl={11} $cols="21px 16px 30px 22px 10px 26px 18px">
                <Label $size={20} $color="#5d5d5d">$</Label>
                <Caret />
                <Label $size={19} $color="#5d5d5d">%</Label>
                <svg width="7" height="10" viewBox="0 0 7 10"><path d="M3 0q3.500 0 3.500 3.500Q6 8 1 9.500q2-2 2-3.500Q0 6 0 3T3 0z" fill="#5d5d5d" /></svg>
                <VLine $h={22} />
                <DecimalIcon />
                <DecimalIcon dec />
              </Strip>
            </Rows>
          </GroupBody>
          <Footer name="Number" shift={6} launcher />
        </Group>

        <Group $w={584}>
          <GroupBody>
            <BigButton $w={94}>
              <IconArea $pt={8} $pl={4}><CondIcon /></IconArea>
              <TextLine><Label $ls={-0.15}>Conditional</Label></TextLine>
              <TextLine $pl={1}><Label $ls={-0.15}>Formatting</Label><Caret /></TextLine>
            </BigButton>
            <BigButton $w={67}>
              <IconArea $pt={7} $pl={5}><TableIcon /></IconArea>
              <TextLine><Label $ls={-0.3}>Format as</Label></TextLine>
              <TextLine $pl={1}><Label $ls={-0.2}>Table</Label><Caret /></TextLine>
            </BigButton>
            <GalleryBox>
              <GalleryGrid>
                <Swatch $bg="#fff" $fg="#000" $kind="active">Normal</Swatch>
                <Swatch $bg="#ffc7ce" $fg="#9c0006">Bad</Swatch>
                <Swatch $bg="#c6efce" $fg="#006100">Good</Swatch>
                <Swatch $bg="#ffeb9c" $fg="#9c6500">Neutral</Swatch>
                <Swatch $bg="#f2f2f2" $fg="#fa7d00" $kind="calc">Calculation</Swatch>
                <Swatch $bg="#a5a5a5" $fg="#fff" $kind="check">Check Cell</Swatch>
              </GalleryGrid>
              <GalleryScroll>
                <ScrollStep><svg width="6" height="4"><path d="M0 4h6L3 0z" fill="#c3c3c3" /></svg></ScrollStep>
                <ScrollStep><Caret /></ScrollStep>
                <ScrollStep><svg width="6" height="1"><path d="M0 0h6v1H0z" fill={ICON} /></svg><Caret /></ScrollStep>
              </GalleryScroll>
            </GalleryBox>
          </GroupBody>
          <Footer name="Styles" />
        </Group>

        <Group $w={161}>
          <GroupBody>
            <BigButton $w={57}>
              <IconArea $pt={5}><InsertIcon /></IconArea>
              <TextLine $pl={1}><Label $ls={-0.2}>Insert</Label></TextLine>
              <TextLine $pl={1}><Caret /></TextLine>
            </BigButton>
            <BigButton $w={45}>
              <IconArea $pt={5}><DeleteIcon /></IconArea>
              <TextLine><Label $ls={-0.2}>Delete</Label></TextLine>
              <TextLine><Caret /></TextLine>
            </BigButton>
            <BigButton $w={56}>
              <IconArea $pt={4}><FormatIcon /></IconArea>
              <TextLine><Label $ls={-0.3}>Format</Label></TextLine>
              <TextLine><Caret /></TextLine>
            </BigButton>
          </GroupBody>
          <Footer name="Cells" shift={1} />
        </Group>

        <Group $w={222}>
          <GroupBody>
            <Rows $w={109}>
              <Strip $h={26} $pl={9} $cols="21px 71px 10px"><SigmaIcon /><Label $ls={-0.3}>AutoSum</Label><Caret /></Strip>
              <Strip $h={28} $pl={8} $cols="22px 23px 10px"><FillIcon /><Label>Fill</Label><Caret /></Strip>
              <Strip $h={26} $pl={8} $cols="22px 38px 10px"><EraserIcon /><Label $ls={-0.3}>Clear</Label><Caret /></Strip>
            </Rows>
            <BigButton $w={54}>
              <IconArea $pt={6}><SortIcon /></IconArea>
              <TextLine><Label $ls={-0.3}>Sort &amp;</Label></TextLine>
              <TextLine $pl={1}><Label $ls={-0.3}>Filter</Label><Caret /></TextLine>
            </BigButton>
            <BigButton $w={52}>
              <IconArea $pt={7}><FindIcon /></IconArea>
              <TextLine><Label $ls={-0.3}>Find &amp;</Label></TextLine>
              <TextLine><Label $ls={-0.3}>Select</Label><Caret /></TextLine>
            </BigButton>
          </GroupBody>
          <Footer name="Editing" />
        </Group>
        <RibbonEnd><svg width="11" height="7" viewBox="0 0 11 7"><path d="m1 6 4.500-4.500L10 6" fill="none" stroke={ICON} strokeWidth="2" /></svg></RibbonEnd>
      </Ribbon>

      <FormulaRow>
        <NameBox><Label $size={15} $ls={0}>E7</Label><Caret /></NameBox>
        <Dots><Dot /><Dot /><Dot /></Dots>
        <FxBox>
          <svg width="18" height="16" viewBox="0 0 18 16"><path d="m1 1 15 14M16 1 1 15" fill="none" stroke="#c6c6c6" strokeWidth="2.400" /></svg>
          <svg width="19" height="15" viewBox="0 0 19 15"><path d="m1 9 5 4L18 1" fill="none" stroke="#c6c6c6" strokeWidth="3.400" /></svg>
          <FxGlyph>fx</FxGlyph>
        </FxBox>
        <div />
        <InputBox><svg width="12" height="8" viewBox="0 0 12 8"><path d="m1 1.500 5 4.500 5-4.500" fill="none" stroke={ICON} strokeWidth="3" /></svg></InputBox>
      </FormulaRow>

      <SheetArea>
        <Sheet>
          <Corner><CornerMark /></Corner>
          {columns.map(c => <ColHead key={c} $on={c === 'E'} $cut={c === 'G'}>{c}</ColHead>)}
          {Array.from({ length: 13 }, (_, i) => i + 1).map(n => (
            <React.Fragment key={n}>
              <RowHead $on={n === 7}>{n < 13 ? n : ''}</RowHead>
              {columns.map(c => {
                const d = cells[c + n];
                return (
                  <Cell key={c} $align={d?.align} $bold={d?.bold} $last={c === 'G'}>
                    {d?.text}
                    {c === 'E' && n === 7 && <Selection><FillHandle /></Selection>}
                  </Cell>
                );
              })}
            </React.Fragment>
          ))}
        </Sheet>
        <VScroll>
          <ScrollButton><svg width="9" height="5"><path d="M0 5h9L4.500 0z" fill={ICON} /></svg></ScrollButton>
          <VThumb />
          <Spacer />
          <ScrollButton><svg width="9" height="5"><path d="M0 0h9L4.500 5z" fill={ICON} /></svg></ScrollButton>
        </VScroll>
      </SheetArea>

      <SheetTabs>
        <NavArrows>
          <svg width="5" height="9"><path d="M5 0v9L0 4.500z" fill="#c3c3c3" /></svg>
          <svg width="5" height="9"><path d="M0 0v9l5-4.500z" fill="#c3c3c3" /></svg>
        </NavArrows>
        <SheetTab><Label $bold $size={15.4} $color={GREEN} $ls={0.1}>Sheet1</Label></SheetTab>
        <div />
        <AddSheet><svg width="20" height="20" viewBox="0 0 20 20" fill="none" stroke={ICON}><circle cx="10" cy="10" r="9.300" strokeWidth="1.200" /><path d="M10 5v10M5 10h10" strokeWidth="2" /></svg></AddSheet>
        <TabDots><Dot /><Dot /><Dot /></TabDots>
        <HScroll>
          <ScrollButton><svg width="5" height="9"><path d="M5 0v9L0 4.500z" fill={ICON} /></svg></ScrollButton>
          <HThumb />
          <Spacer />
          <ScrollButton><svg width="5" height="9"><path d="M0 0v9l5-4.500z" fill={ICON} /></svg></ScrollButton>
        </HScroll>
      </SheetTabs>

      <StatusBar>
        <Status $size={13.2} $color="#fff" $ls={-0.35}>READY</Status>
        <ViewButton $on><svg width="13" height="13" viewBox="0 0 13 13" fill="none" stroke="#fff"><path d="M.5.500h12v12H.500zM4.500.500v12M8.500.500v12M.5 4.500h12M.5 8.500h12" /></svg></ViewButton>
        <ViewButton $pr={1}><svg width="14" height="13" viewBox="0 0 14 13" fill="none" stroke="#fff"><path d="M.5.500h13v12H.500zM3.500 2.500h7v8h-7zM5 4.500h4M5 6.500h4M5 8.500h4" /></svg></ViewButton>
        <ViewButton $pr={5}><svg width="14" height="13" viewBox="0 0 14 13" fill="none" stroke="#fff"><path d="M.5.500h13v12H.500z" /><path d="M1 1h3v7H1zM5.500 1h3v7h-3z" fill="#fff" stroke="none" /></svg></ViewButton>
        <svg width="155" height="14" viewBox="0 0 155 14" fill="#fff">
          <path d="M0 6h9v2H0zM13 6h125v1H13zM75 4h1v6h-1zM101 0h5v13h-5zM142 6h12v2.500h-12zM147 1h2.500v12H147z" />
        </svg>
        <Label $size={13} $color="#fff" $ls={-0.3}>237%</Label>
      </StatusBar>

      <Taskbar>
        <TaskItem><svg width="20" height="20" viewBox="0 0 20 20" fill="#fff"><path d="M0 2.800 8.500 1.600v7.900H0zM9.500 1.400 20 0v9.500H9.500zM0 10.500h8.500v7.900L0 17.200zM9.500 10.500H20V20L9.500 18.600z" /></svg></TaskItem>
        <SearchBox>
          <svg width="21" height="21" viewBox="0 0 21 21" fill="none" stroke="#e8e8e8" strokeWidth="1.500"><circle cx="13" cy="7" r="6.700" /><path d="M8.200 11.800.5 19.500" /></svg>
          <Label $size={18.5} $ls={-0.37} $color="#d0d0d0">Type here to search</Label>
        </SearchBox>
        <TaskItem><svg width="20" height="20" viewBox="0 0 20 20"><circle cx="10" cy="10" r="8.400" fill="none" stroke="#fff" strokeWidth="2.600" /></svg></TaskItem>
        <TaskItem><svg width="20" height="20" viewBox="0 0 20 20" fill="none" stroke="#fff"><path d="M.5 0v3.500h12V0M.5 6h12v8H.500zM.5 20v-3.500h12V20M18.500 0v4M18.500 11v9" /><path d="M17 6.500h3v3h-3z" fill="#fff" stroke="none" /></svg></TaskItem>
        <RunningItem $inset={9}><EdgeIcon /></RunningItem>
        <TaskItem><FolderIcon /></TaskItem>
        <TaskItem $pr={6}><MailIcon /></TaskItem>
        <RunningItem $inset={0} $on $pr={4}><ExcelIcon w={27} /></RunningItem>
        <div />
        <Weather>
          <WeatherIcon />
          <WeatherText>
            <Label $size={17.7} $ls={-0.35} $color="#fff">61°F</Label>
            <Label $size={17.7} $ls={-0.3} $color="#fff">Mostly sunny</Label>
          </WeatherText>
        </Weather>
        <Tray>
          <svg width="17" height="9" viewBox="0 0 17 9"><path d="m.7 8.500 7.800-7.700 7.800 7.700" fill="none" stroke="#fff" strokeWidth="1.400" /></svg>
          <svg width="15" height="18" viewBox="0 0 15 18" fill="none" stroke="#fff"><path d="M.5 4.500h9v9h-9zM9.500 7.500l4-2.500v8l-4-2.500M1.500 2Q6 -1 11.500 2M1.500 16Q6 19 11.500 16" strokeWidth="1.200" /></svg>
          <svg width="20" height="14" viewBox="0 0 20 14" fill="none" stroke="#fff"><path d="M4.500 3.500h13.500v9H4.500zM18.500 6v4" /><path d="M6.500 5.500h10v5.500h-10z" fill="#fff" stroke="none" /><path d="M0 2.500h5v2.500q-2.500 2.500-5 0zM1.500 0v2M3.500 0v2M2.500 6v5" /></svg>
          <svg width="16" height="16" viewBox="0 0 16 16" fill="none" stroke="#c9c9c9" strokeWidth="1.200"><path d="M.5 15A14.500 14.500 0 0 1 15 .5M4.500 15A10.500 10.500 0 0 1 15 4.500M8 15a7 7 0 0 1 7-7" /><circle cx="13" cy="13.500" r="1.500" fill="#fff" stroke="none" /></svg>
          <svg width="20" height="18" viewBox="0 0 20 18" fill="none" stroke="#fff"><path d="M.5 6.500h2.500L7 2.500v13l-4-4H.500zM10 6q2 3 0 6M13 4q3.500 5 0 10M16 1.500q5 7.500 0 15" /></svg>
        </Tray>
        <Clock>
          <Label $size={15.2} $ls={-0.35} $color="#fff">3:51 PM</Label>
          <Label $size={15.2} $ls={-0.35} $color="#fff">2/9/2022</Label>
        </Clock>
        <Notifications>
          <svg width="32" height="32" viewBox="0 0 32 32">
            <path d="M1 1h20v16H11v4l-4-4H1z" fill="#fff" />
            <path d="M5 5.500h12M5 9h12M5 12.500h8" stroke="#222" strokeWidth="1.200" />
            <circle cx="20.500" cy="20.500" r="10" fill="#3a3a3a" fillOpacity=".92" stroke="#9a9a9a" />
            <text x="17" y="26" fontSize="15" fill="#fff">1</text>
          </svg>
        </Notifications>
        <ShowDesktop />
      </Taskbar>
    </Window>
  );
}
